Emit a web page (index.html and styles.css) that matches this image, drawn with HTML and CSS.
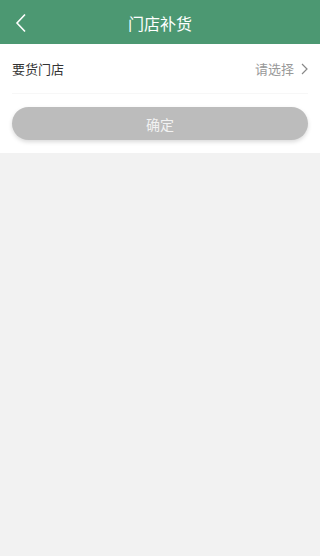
FILE: index.html
```html
<!DOCTYPE html>
<html lang="zh-CN">
<head>
    <meta charset="UTF-8">
    <meta name="viewport" content="width=device-width, initial-scale=1.0">
    <title>门店补货</title>
    <link rel="stylesheet" href="styles.css">
</head>
<body>
    <div class="header">
        <a class="back" href="#">
            <svg width="12" height="20" viewBox="0 0 12 20"><path d="M10 1.5 L2 10 L10 18.5" fill="none" stroke="#fff" stroke-width="1.6"/></svg>
        </a>
        <span class="title">门店补货</span>
    </div>

    <div class="panel">
        <div class="row">
            <span class="label">要货门店</span>
            <span class="pick">请选择
                <svg width="7" height="12" viewBox="0 0 7 12"><path d="M1 1 L6 6 L1 11" fill="none" stroke="#888" stroke-width="1.2"/></svg>
            </span>
        </div>
        <div class="actions">
            <button class="submit">确定</button>
        </div>
    </div>
</body>
</html>
```

FILE: styles.css
```css
body {
    margin: 0;
    background: #f2f2f2;
    font-family: "Noto Sans CJK SC", "Noto Sans", sans-serif;
}
.header {
    height: 44px;
    background: #4c9872;
    display: flex;
    align-items: center;
    justify-content: center;
    position: relative;
}
.back {
    position: absolute;
    left: 15px;
    top: 13px;
    display: flex;
}
.title {
    color: #fff;
    font-size: 16px;
    padding-top: 2px;
}
.panel {
    background: #fff;
}
.row {
    height: 49px;
    margin: 0 12px;
    display: flex;
    align-items: center;
    justify-content: space-between;
    border-bottom: 1px solid #f7f7f7;
}
.label {
    font-size: 13px;
    color: #333;
}
.pick {
    font-size: 13px;
    color: #999;
    display: flex;
    align-items: center;
    gap: 7px;
}
.actions {
    padding: 13px 12px;
}
.submit {
    display: block;
    width: 100%;
    height: 33px;
    border: none;
    border-radius: 17px;
    background: #bcbcbc;
    color: #f2f2f2;
    font-family: inherit;
    font-size: 14px;
    box-shadow: 0 2px 4px rgba(0,0,0,0.15);
}
```
